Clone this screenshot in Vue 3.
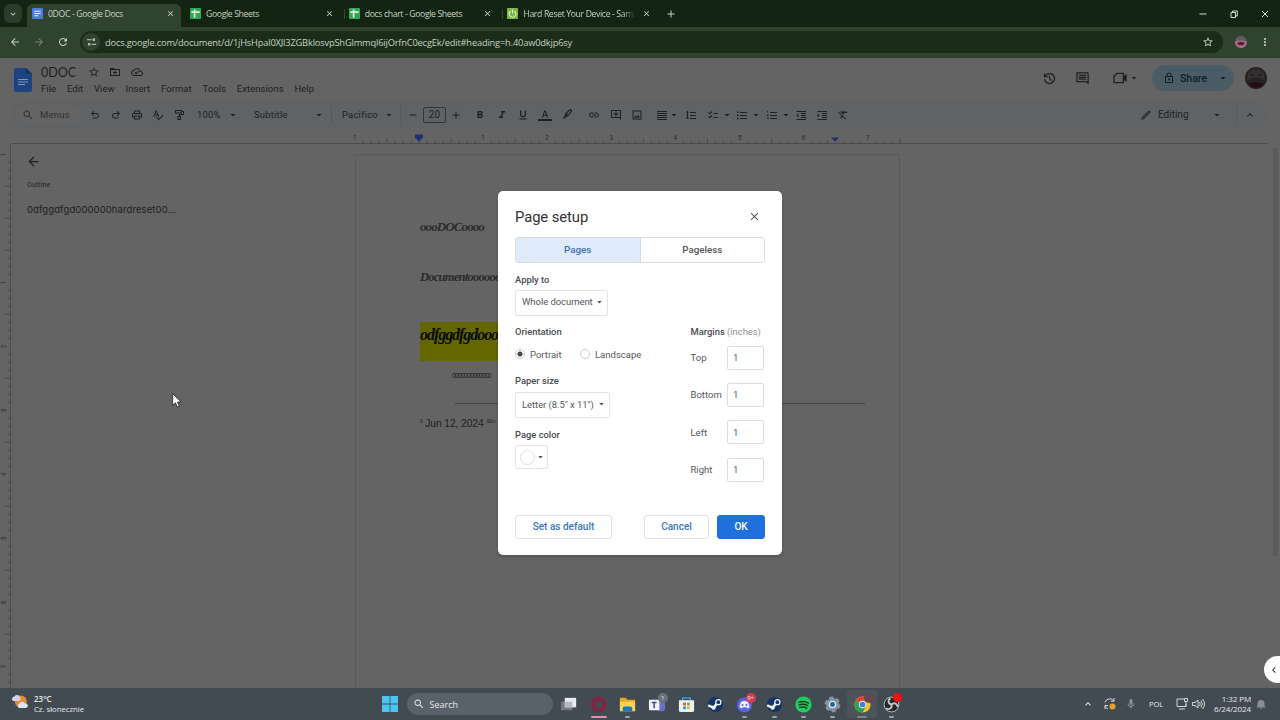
<script setup>
import { h, ref } from "vue";

const paths = {
  back: "M20 11H7.83l5.59-5.59L12 4l-8 8 8 8 1.41-1.41L7.83 13H20v-2z",
  forward: "M4 11h12.17l-5.59-5.59L12 4l8 8-8 8-1.41-1.41L16.17 13H4v-2z",
  reload:
    "M17.65 6.35C16.2 4.9 14.21 4 12 4c-4.42 0-7.99 3.58-7.99 8s3.57 8 7.99 8c3.73 0 6.84-2.55 7.73-6h-2.08c-.82 2.33-3.04 4-5.65 4-3.31 0-6-2.69-6-6s2.69-6 6-6c1.66 0 3.14.69 4.22 1.78L13 11h7V4l-2.35 2.35z",
  tune: "M2 6h10v2H2zM17 4a3 3 0 1 0 0 6 3 3 0 0 0 0-6zm0 2a1 1 0 1 1 0 2 1 1 0 0 1 0-2zM12 16h10v2H12zM7 14a3 3 0 1 0 0 6 3 3 0 0 0 0-6zm0 2a1 1 0 1 1 0 2 1 1 0 0 1 0-2z",
  star: "M22 9.24l-7.19-.62L12 2 9.19 8.63 2 9.24l5.46 4.73L5.82 21 12 17.27 18.18 21l-1.63-7.03L22 9.24zM12 15.4l-3.76 2.27 1-4.28-3.32-2.88 4.38-.38L12 6.1l1.71 4.04 4.38.38-3.32 2.88 1 4.28L12 15.4z",
  more: "M12 8c1.1 0 2-.9 2-2s-.9-2-2-2-2 .9-2 2 .9 2 2 2zm0 2c-1.1 0-2 .9-2 2s.9 2 2 2 2-.9 2-2-.9-2-2-2zm0 6c-1.1 0-2 .9-2 2s.9 2 2 2 2-.9 2-2-.9-2-2-2z",
  close: "M19 6.41L17.59 5 12 10.59 6.41 5 5 6.41 10.59 12 5 17.59 6.41 19 12 13.41 17.59 19 19 17.59 13.41 12z",
  plus: "M19 13h-6v6h-2v-6H5v-2h6V5h2v6h6v2z",
  minus: "M19 13H5v-2h14v2z",
  down: "M7 10l5 5 5-5z",
  chevronDown: "M7.41 8.59L12 13.17l4.59-4.58L18 10l-6 6-6-6 1.41-1.41z",
  chevronUp: "M7.41 15.41L12 10.83l4.59 4.58L18 14l-6-6-6 6z",
  chevronLeft: "M15.41 7.41L14 6l-6 6 6 6 1.41-1.41L10.83 12z",
  move: "M2 4h8l2 2h10v14H2V4zm2 4v10h16V8H4zm7 1h2v3h3v2h-3v3h-2v-3H8v-2h3z",
  cloud:
    "M19.35 10.04A7.49 7.49 0 0 0 12 4C9.11 4 6.6 5.64 5.35 8.04A5.994 5.994 0 0 0 0 14c0 3.31 2.69 6 6 6h13c2.76 0 5-2.24 5-5 0-2.64-2.05-4.78-4.65-4.96zM19 18H6c-2.21 0-4-1.79-4-4s1.79-4 4-4h.71C7.37 7.69 9.48 6 12 6c3.04 0 5.5 2.46 5.5 5.5v.5H19c1.66 0 3 1.34 3 3s-1.34 3-3 3zm-9-3.82l-2.09-2.09L6.5 13.5 10 17l6.01-6.01-1.41-1.41z",
  history:
    "M12 21q-3.45 0-6.012-2.287T3.05 13H5.1q.35 2.6 2.313 4.3T12 19q2.925 0 4.963-2.037T19 12t-2.037-4.962T12 5q-1.725 0-3.225.8T6.25 8H9v2H3V4h2v2.35q1.275-1.6 3.113-2.475T12 3q1.875 0 3.513.713t2.85 1.924 1.925 2.85T21 12t-.712 3.513-1.925 2.85-2.85 1.925T12 21m2.8-4.8L11 12.4V7h2v4.6l3.2 3.2z",
  comment:
    "M21.99 4c0-1.1-.89-2-1.99-2H4c-1.1 0-2 .9-2 2v12c0 1.1.9 2 2 2h14l4 4-.01-18zM20 4v13.17L18.83 16H4V4h16zM6 12h12v2H6zm0-3h12v2H6zm0-3h12v2H6z",
  video: "M7 4h11v5l4-3v12l-4-3v5H2V9zM8 6L4 10v8h12V6z",
  lock: "M18 8h-1V6c0-2.76-2.24-5-5-5S7 3.24 7 6v2H6c-1.1 0-2 .9-2 2v10c0 1.1.9 2 2 2h12c1.1 0 2-.9 2-2V10c0-1.1-.9-2-2-2zM9 6c0-1.66 1.34-3 3-3s3 1.34 3 3v2H9V6zm9 14H6V10h12v10zm-6-3c1.1 0 2-.9 2-2s-.9-2-2-2-2 .9-2 2 .9 2 2 2z",
  search:
    "M15.5 14h-.79l-.28-.27C15.41 12.59 16 11.11 16 9.5 16 5.91 13.09 3 9.5 3S3 5.91 3 9.5 5.91 16 9.5 16c1.61 0 3.09-.59 4.23-1.57l.27.28v.79l5 4.99L20.49 19l-4.99-5zm-6 0C7.01 14 5 11.99 5 9.5S7.01 5 9.5 5 14 7.01 14 9.5 11.99 14 9.5 14z",
  undo: "M7 19v-2h7.1q1.575 0 2.738-1T18 13.5 16.838 11 14.1 10H7.8l2.6 2.6L9 14 4 9l5-5 1.4 1.4L7.8 8h6.3q2.425 0 4.163 1.575T20 13.5t-1.737 3.925T14.1 19z",
  redo: "M17 19v-2H9.9q-1.575 0-2.738-1T6 13.5 7.162 11 9.9 10h6.3l-2.6 2.6L15 14l5-5-5-5-1.4 1.4L16.2 8H9.9Q7.475 8 5.737 9.575T4 13.5t1.737 3.925T9.9 19z",
  print:
    "M19 8h-1V3H6v5H5c-1.66 0-3 1.34-3 3v6h4v4h12v-4h4v-6c0-1.66-1.34-3-3-3zM8 5h8v3H8V5zm8 12v2H8v-4h8v2zm2-2v-2H6v2H4v-4c0-.55.45-1 1-1h14c.55 0 1 .45 1 1v4h-2z",
  spell:
    "M12.45 16h2.09L9.43 3H7.57L2.46 16h2.09l1.12-3h5.64l1.14 3zm-6.02-5L8.5 5.48 10.57 11H6.43zm15.16.59l-8.09 8.09L9.83 16l-1.41 1.41 5.09 5.09L23 13l-1.41-1.41z",
  paint: "M4 2h14v2h4v8h-8v2h2v8H9v-8h3v-4h8V6h-2v3H4zM6 4v3h10V4zM11 16v4h3v-4z",
  bold: "M15.6 10.79c.97-.67 1.65-1.77 1.65-2.79 0-2.26-1.75-4-4-4H7v14h7.04c2.09 0 3.71-1.7 3.71-3.79 0-1.52-.86-2.82-2.15-3.42zM10 6.5h3c.83 0 1.5.67 1.5 1.5s-.67 1.5-1.5 1.5h-3v-3zm3.5 9H10v-3h3.5c.83 0 1.5.67 1.5 1.5s-.67 1.5-1.5 1.5z",
  italic: "M10 4v3h2.21l-3.42 8H6v3h8v-3h-2.21l3.42-8H18V4z",
  underline:
    "M12 17c3.31 0 6-2.69 6-6V3h-2.5v8c0 1.93-1.57 3.5-3.5 3.5S8.5 12.93 8.5 11V3H6v8c0 3.31 2.69 6 6 6zm-7 2v2h14v-2H5z",
  color:
    "M-2 20h28v4H-2v-4zm7.49-3h2.42l1.27-3.58h5.65L16.09 17h2.42L13.25 3h-2.5L5.49 17zm4.42-5.61l2.03-5.79h.12l2.03 5.79H9.91z",
  marker: "M18 0q5 1 4 5l-7 9-5 2-4 4-2-2 3-4 2-6zm0 3l-6 6 2 3 6-8z",
  link: "M3.9 12c0-1.71 1.39-3.1 3.1-3.1h4V7H7c-2.76 0-5 2.24-5 5s2.24 5 5 5h4v-1.9H7c-1.71 0-3.1-1.39-3.1-3.1zM8 13h8v-2H8v2zm9-6h-4v1.9h4c1.71 0 3.1 1.39 3.1 3.1s-1.39 3.1-3.1 3.1h-4V17h4c2.76 0 5-2.24 5-5s-2.24-5-5-5z",
  addComment: "M2 2h20v20l-4-4H2zm2 2v12h15l1 1V4zM11 5h2v4h4v2h-4v4h-2v-4H7V9h4z",
  image:
    "M19 5v14H5V5h14m0-2H5c-1.1 0-2 .9-2 2v14c0 1.1.9 2 2 2h14c1.1 0 2-.9 2-2V5c0-1.1-.9-2-2-2zm-4.86 8.86l-3 3.87L9 13.14 6 17h12l-3.86-5.14z",
  justify: "M2 22h20v-2H2v2zm0-4h20v-2H2v2zm0-4h20v-2H2v2zm0-4h20V8H2v2zm0-6v2h20V4H2z",
  spacing:
    "M6 7h2.5L5 3.5 1.5 7H4v10H1.5L5 20.5 8.5 17H6V7zm4-1v2h12V6H10zm0 14h12v-2H10v2zm0-6h12v-2H10v2z",
  checklist:
    "M22 8h-9v2h9V8zm0 8h-9v2h9v-2zM5.54 11L2 7.46l1.41-1.41 2.12 2.12 4.24-4.24 1.41 1.41L5.54 11zm0 8L2 15.46l1.41-1.41 2.12 2.12 4.24-4.24 1.41 1.41L5.54 19z",
  bullets:
    "M2 5h3v3H2zM2 11.500h3v3H2zM2 18h3v3H2zM8 20h14v-2H8v2zm0-6h14v-2H8v2zm0-8v2h14V6H8z",
  numbers:
    "M2 17h2v.5H3v1h1v.5H2v1h3v-4H2v1zm1-9h1V4H2v1h1v3zm-1 3h1.8L2 13.1v.9h3v-1H3.2L5 10.9V10H2v1zM8 6v2h14V6H8zm0 14h14v-2H8v2zm0-6h14v-2H8v2z",
  outdent: "M12 18h10v-2H12v2zM3 13l4 4V9l-4 4zm0 9h19v-2H3v2zM3 4v2h19V4H3zm9 6h10V8H12v2zm0 4h10v-2H12v2z",
  indent: "M3 22h19v-2H3v2zM3 9v8l4-4-4-4zm9 9h10v-2H12v2zM3 4v2h19V4H3zm9 6h10V8H12v2zm0 4h10v-2H12v2z",
  clear:
    "M3.27 5L2 6.27l6.97 6.97L6.5 19h3l1.57-3.66L16.73 21 18 19.73 3.55 5.27 3.27 5zM6 5v.18L8.82 8h2.4l-.72 1.68 2.1 2.1L14.21 8H20V5H6z",
  edit: "M14.06 9.02l.92.92L5.92 19H5v-.92l9.06-9.06M17.66 3c-.25 0-.51.1-.7.29l-1.83 1.83 3.75 3.75 1.83-1.83c.39-.39.39-1.02 0-1.41l-2.34-2.34c-.2-.2-.45-.29-.71-.29zm-3.6 3.19L3 17.25V21h3.75L17.81 9.94l-3.75-3.75z",
  mic: "M12 14c1.66 0 3-1.34 3-3V5c0-1.66-1.34-3-3-3S9 3.34 9 5v6c0 1.66 1.34 3 3 3zm5-3c0 2.76-2.24 5-5 5s-5-2.24-5-5H5c0 3.53 2.61 6.43 6 6.92V21h2v-3.08c3.39-.49 6-3.39 6-6.92h-2z",
  bell: "M12 22c1.1 0 2-.9 2-2h-4c0 1.1.89 2 2 2zm7-6v-5c0-3.6-2.4-7-7-7s-7 3.4-7 7v5l-2 2v1h18v-1l-2-2z",
};

const Icon = (props) =>
  h("svg", { class: "icon", viewBox: "0 0 24 24" }, [h("path", { d: paths[props.name] })]);
Icon.props = ["name"];

const tabs = [
  { title: "0DOC - Google Docs", kind: "doc" },
  { title: "Google Sheets", kind: "sheet" },
  { title: "docs chart - Google Sheets", kind: "sheet" },
  { title: "Hard Reset Your Device - Sams", kind: "power" },
];
const menus = ["File", "Edit", "View", "Insert", "Format", "Tools", "Extensions", "Help"];
const margins = ref([
  { label: "Top", value: "1" },
  { label: "Bottom", value: "1" },
  { label: "Left", value: "1" },
  { label: "Right", value: "1" },
]);

// one inch on the rulers is 64.1px, with a tick every 1/8
const inch = 64.1;
const hTicks = Array.from({ length: 69 }, (_, i) => i).filter((i) => i % 8 || i === 8);
const vTicks = Array.from({ length: 67 }, (_, i) => i).filter((i) => i % 8 || i === 8);
const inches = [-1, 1, 2, 3, 4, 5, 6, 7];
</script>

<template>
  <div class="screen">
    <header class="tab-strip">
      <button class="tab-search"><Icon name="chevronDown" /></button>
      <div v-for="(tab, i) in tabs" :key="i" class="tab" :class="{ active: i === 0 }">
        <svg class="favicon" viewBox="0 0 12 12">
          <rect width="12" height="12" rx="1" :class="tab.kind" />
          <path v-if="tab.kind === 'doc'" d="M2.5 3.5h7M2.5 6h7M2.5 8.5h4.5" />
          <path v-else-if="tab.kind === 'sheet'" d="M1.5 4.5h9M5 1.5v9" class="thick" />
          <path v-else d="M4 3.2a3.7 3.7 0 1 0 4 0M6 1.5v4.5" />
        </svg>
        <span class="tab-title">{{ tab.title }}</span>
        <Icon name="close" />
      </div>
      <button class="new-tab"><Icon name="plus" /></button>
      <div class="win-buttons">
        <svg viewBox="0 0 10 10"><path d="M1.5 5h7" /></svg>
        <svg viewBox="0 0 10 10"><path d="M2 3.5h4.5v5H2zM3.5 3.5v-1.5h4.8v5H6.5" /></svg>
        <svg viewBox="0 0 10 10"><path d="M2 2l6 6M8 2l-6 6" /></svg>
      </div>
    </header>

    <nav class="address-bar">
      <Icon name="back" />
      <Icon name="forward" class="dim" />
      <Icon name="reload" />
      <div class="omnibox">
        <span class="site-info"><Icon name="tune" /></span>
        <span class="url">docs.google.com/document/d/1jHsHpal0XJl3ZGBklosvpShGlmmql6ijOrfnC0ecgEk/edit#heading=h.40aw0dkjp6sy</span>
        <Icon name="star" />
      </div>
      <svg class="avatar-small" viewBox="0 0 12 12">
        <circle cx="6" cy="6" r="6" fill="#665b61" />
        <path d="M0 6c3-2 8-2 12 0a6 6 0 0 1-12 0" fill="#9a7886" />
        <ellipse cx="6" cy="7.5" rx="3.6" ry="1.8" fill="#6d1235" />
      </svg>
      <Icon name="more" />
    </nav>

    <main class="docs">
      <div class="docs-header">
        <svg class="docs-logo" viewBox="0 0 18 24">
          <path d="M2 0h10l6 6v16a2 2 0 0 1-2 2H2a2 2 0 0 1-2-2V2a2 2 0 0 1 2-2z" fill="#1d4380" />
          <path d="M12 0l6 6h-6z" fill="#143363" />
          <path d="M4 11.5h10M4 14h10M4 16.5h7" stroke="#8295b2" stroke-width="1.2" />
        </svg>
        <div class="title-block">
          <div class="title-row">
            <span class="doc-title">0DOC</span>
            <Icon name="star" />
            <Icon name="move" />
            <Icon name="cloud" />
          </div>
          <div class="menu-row">
            <span v-for="menu in menus" :key="menu">{{ menu }}</span>
          </div>
        </div>
        <div class="header-actions">
          <Icon name="history" />
          <Icon name="comment" />
          <span class="meet"><Icon name="video" /><Icon name="down" class="caret" /></span>
          <button class="share">
            <Icon name="lock" /><span>Share</span><Icon name="down" class="caret" />
          </button>
          <svg class="avatar" viewBox="0 0 22 22">
            <circle cx="11" cy="11" r="11" fill="#262022" />
            <path d="M3 6c4-5 12-5 16 0l1 7c-6-3-12-3-18 0z" fill="#333032" />
            <ellipse cx="7.5" cy="8" rx="2" ry="1" fill="#252022" />
            <ellipse cx="14.5" cy="8" rx="2" ry="1" fill="#252022" />
            <path d="M4 17c4-2.500 10-2.500 14 0-4 4.500-10 4.500-14 0" fill="#2a0812" />
          </svg>
        </div>
      </div>

      <div class="toolbar">
        <div class="menus-pill"><Icon name="search" /><span>Menus</span></div>
        <div class="cells first">
          <Icon v-for="n in ['undo', 'redo', 'print', 'spell', 'paint']" :key="n" :name="n" />
        </div>
        <div class="drop zoom"><span>100%</span><Icon name="down" class="caret" /></div>
        <div class="drop style"><span>Subtitle</span><Icon name="down" class="caret" /></div>
        <div class="drop font"><span>Pacifico</span><Icon name="down" class="caret" /></div>
        <div class="size">
          <Icon name="minus" /><span class="size-box">20</span><Icon name="plus" />
        </div>
        <div class="cells format">
          <Icon v-for="n in ['bold', 'italic', 'underline', 'color', 'marker']" :key="n" :name="n" :class="n" />
        </div>
        <div class="cells insert">
          <Icon v-for="n in ['link', 'addComment', 'image']" :key="n" :name="n" />
        </div>
        <div class="lists">
          <Icon name="justify" /><Icon name="down" />
          <Icon name="spacing" />
          <Icon name="checklist" /><Icon name="down" />
          <Icon name="bullets" /><Icon name="down" />
          <Icon name="numbers" /><Icon name="down" />
          <Icon name="outdent" /><Icon name="indent" /><Icon name="clear" />
        </div>
        <div class="mode">
          <Icon name="edit" /><span>Editing</span><Icon name="down" class="caret" />
        </div>
        <div class="collapse"><Icon name="chevronUp" /></div>
      </div>

      <svg class="ruler-h" viewBox="0 0 1280 16">
        <path d="M11 15.5H1268" />
        <path v-for="i in hTicks" :key="i" :d="`M${354.9 + (i * inch) / 8} ${i % 4 ? 12.5 : 10}V15.5`" />
        <text v-for="n in inches" :key="n" :x="419 + n * inch" y="12">{{ Math.abs(n) }}</text>
        <path class="handle" d="M415 6.5h8v3l-4 4-4-4z" />
        <path class="handle" d="M831 9.5h8l-4 4z" />
      </svg>

      <div class="workspace">
        <svg class="ruler-v" viewBox="0 0 12 544">
          <path d="M10.5 0V544" />
          <path v-for="i in vTicks" :key="i" :d="`M${i % 4 ? 8 : 4.5} ${10.4 + (i * 64) / 8}H10.5`" />
          <text v-for="n in inches" :key="n" :transform="`translate(6 ${74.4 + n * 64}) rotate(-90)`">{{ Math.abs(n) }}</text>
        </svg>
        <aside class="outline">
          <Icon name="back" />
          <h2>Outline</h2>
          <p>0dfggdfgd000000hardreset00...</p>
        </aside>
        <article class="page">
          <p class="script line-a">oooDOCoooo</p>
          <p class="script line-b">Documentoooooo</p>
          <p class="script line-c">odfggdfgdooo</p>
          <p class="line-d">0000000000000</p>
          <hr />
          <p class="line-e"><sup>0</sup> <b>Jun 12, 2024</b> <sup>00m</sup></p>
        </article>
        <div class="scrollbar"></div>
      </div>
    </main>

    <footer class="taskbar">
      <div class="weather">
        <svg viewBox="0 0 16 16">
          <circle cx="8.8" cy="7.5" r="6" fill="#e58a35" />
          <path d="M1 7a2.500 2.500 0 0 1 1.500-4.500A3 3 0 0 1 8 3.500 2 2 0 0 1 7 7z" fill="#cbd6f3" />
          <path d="M7 14a2.500 2.500 0 0 1 .5-4.500 3 3 0 0 1 5.500 0 2.200 2.200 0 0 1 1 4.500z" fill="#dfe4fb" />
        </svg>
        <div><b>23°C</b><span>Cz. słonecznie</span></div>
      </div>

      <div class="apps">
        <svg class="start" viewBox="0 0 16 16">
          <path d="M0 0h7.600v7.600H0zM8.400 0H16v7.600H8.400zM0 8.400h7.600V16H0zM8.400 8.400H16V16H8.400z" fill="#4cc4f2" />
        </svg>
        <div class="search-box"><Icon name="search" /><span>Search</span></div>
        <div class="app">
          <svg viewBox="0 0 20 20">
            <rect x="1" y="7" width="12" height="9" fill="#737a80" />
            <rect x="5" y="3" width="12" height="10" fill="#e9ecee" />
            <rect x="5" y="7" width="8" height="6" fill="#b4b9bd" />
          </svg>
        </div>
        <div class="app opera">
          <svg viewBox="0 0 20 20">
            <ellipse cx="10" cy="10" rx="6" ry="6.500" fill="none" stroke="#852440" stroke-width="4" />
          </svg>
        </div>
        <div class="app running">
          <svg viewBox="0 0 20 20">
            <path d="M2 3h6l2 2h8v12H2z" fill="#e5a91f" />
            <path d="M2 7h16v10H2z" fill="#fbd258" />
            <path d="M5 17v-3q0-2 2-2h6q2 0 2 2v3z" fill="#187cba" />
          </svg>
        </div>
        <div class="app">
          <svg viewBox="0 0 20 20">
            <rect x="9" y="6" width="9" height="11" rx="3" fill="#6b70c8" />
            <rect x="1" y="5" width="11" height="11" rx="1" fill="#eef0fb" />
            <path d="M4 8h5M6.500 8v6" stroke="#444b92" stroke-width="1.600" />
          </svg>
          <i class="badge gray">1</i>
        </div>
        <div class="app">
          <svg viewBox="0 0 20 20">
            <path d="M6 6V3h8v3" fill="none" stroke="#33a5df" stroke-width="1.500" />
            <path d="M2 5.500h16V16q0 2-2 2H4q-2 0-2-2z" fill="#eef1f4" />
            <path d="M6.500 8h3v3h-3z" fill="#e2572c" />
            <path d="M10.500 8h3v3h-3z" fill="#76b52b" />
            <path d="M6.500 12h3v3h-3z" fill="#249bd8" />
            <path d="M10.500 12h3v3h-3z" fill="#edb522" />
          </svg>
        </div>
        <div class="app">
          <svg viewBox="0 0 20 20">
            <circle cx="10" cy="10" r="8" fill="#123665" />
            <path d="M2.300 11l6 2.500 3.500-5" stroke="#eef3f8" stroke-width="2.600" fill="none" />
            <circle cx="13" cy="7.500" r="2.700" fill="#123665" stroke="#eef3f8" stroke-width="1.300" />
            <circle cx="8" cy="13.300" r="2.200" fill="#eef3f8" />
          </svg>
        </div>
        <div class="app running">
          <svg viewBox="0 0 20 20">
            <circle cx="10" cy="10.500" r="8" fill="#5865e8" />
            <path d="M6.500 7q3.500-1.300 7 0 1.800 3 1.700 6.200l-2.300 1.100-.9-1.300H8l-.9 1.300-2.300-1.100Q4.700 10 6.500 7z" fill="#f2f3ff" />
            <circle cx="8" cy="10.500" r="1.100" fill="#5865e8" />
            <circle cx="12" cy="10.500" r="1.100" fill="#5865e8" />
          </svg>
          <i class="badge red">9+</i>
        </div>
        <div class="app running">
          <svg viewBox="0 0 20 20">
            <circle cx="10" cy="10" r="8" fill="#123665" />
            <path d="M2.300 11l6 2.500 3.500-5" stroke="#eef3f8" stroke-width="2.600" fill="none" />
            <circle cx="13" cy="7.500" r="2.700" fill="#123665" stroke="#eef3f8" stroke-width="1.300" />
            <circle cx="8" cy="13.300" r="2.200" fill="#eef3f8" />
          </svg>
        </div>
        <div class="app running">
          <svg viewBox="0 0 20 20">
            <circle cx="10" cy="10" r="8.500" fill="#1ed05e" />
            <path d="M5 7.500q5.500-1.600 10.300 1M5.500 10.300q4.700-1.300 8.900 1M6 13q4-1 7.300.9" fill="none" stroke="#123420" stroke-width="1.500" stroke-linecap="round" />
          </svg>
        </div>
        <div class="app running">
          <svg viewBox="0 0 20 20">
            <circle cx="10" cy="10" r="6.800" fill="#88939c" />
            <circle cx="10" cy="10" r="7" fill="none" stroke="#88939c" stroke-width="2.600" stroke-dasharray="4.400 2.930" />
            <circle cx="10" cy="10" r="3.300" fill="#1d62a7" stroke="#d4e5f3" stroke-width="1.400" />
          </svg>
        </div>
        <div class="app running selected">
          <svg viewBox="0 0 20 20">
            <circle cx="10" cy="10" r="8.500" fill="#efc52f" />
            <path d="M10 10L2.640 5.750A8.500 8.500 0 0 1 17.360 5.750z" fill="#dd4436" />
            <path d="M10 10L2.640 5.750A8.500 8.500 0 0 0 10 18.500l3.500-6z" fill="#2da14f" />
            <circle cx="10" cy="10" r="3.900" fill="#f2f4f6" />
            <circle cx="10" cy="10" r="3" fill="#3d7ee0" />
          </svg>
          <i class="badge face"></i>
        </div>
        <div class="app running">
          <svg viewBox="0 0 20 20">
            <circle cx="10" cy="10" r="7.800" fill="#24262a" stroke="#c2c5c8" stroke-width="1" />
            <path d="M10 10C6 9 6 5 9 3.500M10 10c3-2.800 6.500-.5 6.300 2.700M10 10c1 4-2.800 6-5.600 4" fill="none" stroke="#c2c5c8" stroke-width="2" />
          </svg>
          <i class="badge alert"></i>
        </div>
      </div>

      <div class="tray">
        <Icon name="chevronUp" />
        <svg class="sync" viewBox="0 0 14 14">
          <path d="M2 5.500A5 5 0 0 1 11 4M11 1v3.200H7.800M5 12A5 5 0 0 1 2 8.500M2 12V8.500h3" />
          <circle cx="9.500" cy="9.500" r="3" />
        </svg>
        <Icon name="mic" class="dim" />
        <span class="lang">POL</span>
        <svg class="net" viewBox="0 0 14 14">
          <path d="M9 2H2v7.500h9V7M4 12h6M9.500 1.500h3v3h-3zM11 4.500v5" />
        </svg>
        <svg class="net" viewBox="0 0 14 14">
          <path d="M1.500 5.500H4L7 3v8L4 8.500H1.500zM8.500 5q1.500 2 0 4M10 3.500q2.700 3.500 0 7M11.500 2q4 5 0 10" />
        </svg>
        <div class="clock"><span>1:32 PM</span><span>6/24/2024</span></div>
        <Icon name="bell" class="dim" />
      </div>
    </footer>

    <section class="dialog">
      <div class="dialog-head"><h1>Page setup</h1><Icon name="close" /></div>
      <div class="segmented"><button class="on">Pages</button><button>Pageless</button></div>
      <div class="dialog-body">
        <div class="options">
          <h3>Apply to</h3>
          <button class="select">Whole document<Icon name="down" /></button>
          <h3 class="h-orient">Orientation</h3>
          <div class="radios">
            <label><i class="radio checked"></i>Portrait</label>
            <label><i class="radio"></i>Landscape</label>
          </div>
          <h3 class="h-paper">Paper size</h3>
          <button class="select paper">Letter (8.5" x 11")<Icon name="down" /></button>
          <h3 class="h-color">Page color</h3>
          <button class="swatch"><i></i><Icon name="down" /></button>
        </div>
        <div class="margins">
          <h3>Margins <span>(inches)</span></h3>
          <label v-for="m in margins" :key="m.label">
            {{ m.label }}<input v-model="m.value" type="text" />
          </label>
        </div>
      </div>
      <div class="dialog-actions">
        <button class="default">Set as default</button>
        <button class="cancel">Cancel</button>
        <button class="ok">OK</button>
      </div>
    </section>

    <button class="side-handle"><Icon name="chevronLeft" /></button>
    <svg class="cursor" viewBox="0 0 10 15">
      <path d="M.7.7v11.600l2.700-2.500 1.900 4.200 2-.9-1.900-4.100h3.700z" fill="#fff" stroke="#222" stroke-width=".8" />
    </svg>
  </div>
</template>

<style>
body {
  overflow: hidden;
  background: #646464;
}
</style>

<style scoped>
* {
  box-sizing: border-box;
}

.screen {
  position: relative;
  width: 1280px;
  height: 720px;
  display: flex;
  flex-direction: column;
  overflow: hidden;
  font-family: Roboto, "Liberation Sans", sans-serif;
  font-size: 9.5px;
  color: #1f2022;
}

button {
  font: inherit;
  color: inherit;
  border: none;
  background: transparent;
  padding: 0;
}

h1,
h2,
h3,
p {
  margin: 0;
  font-weight: 400;
}

.icon {
  width: 12px;
  height: 12px;
  flex: none;
  fill: currentColor;
}

.dim {
  opacity: 0.45;
}

/* browser chrome */
.tab-strip {
  height: 27px;
  display: flex;
  align-items: center;
  background: #142412;
  color: #c6d2c3;
  font-family: "Open Sans", sans-serif;
  font-size: 8.7px;
  letter-spacing: -0.37px;
}

.tab-search {
  width: 18px;
  height: 19px;
  margin: 0 5px 0 4px;
  border-radius: 6px;
  background: #2b3c2a;
  display: flex;
  align-items: center;
  justify-content: center;
}

.tab-search .icon {
  width: 10px;
}

.tab {
  width: 158.7px;
  height: 23px;
  margin-top: 4px;
  padding: 0 10px 4px 5px;
  display: flex;
  align-items: center;
  gap: 5px;
}

.tab.active {
  width: 154px;
  margin-right: 4px;
  padding-right: 6px;
  border-radius: 6px 6px 0 0;
  background: #30432f;
}

.tab + .tab + .tab {
  background: linear-gradient(#35472f, #35472f) 0 5px / 1px 10px no-repeat;
}

.favicon {
  width: 11px;
  height: 11px;
  flex: none;
  fill: none;
  stroke: #e2efdc;
  stroke-width: 1.2;
}

.favicon rect {
  stroke: none;
}

.favicon .thick {
  stroke-width: 1.8;
}

.doc {
  fill: #4a7fd0;
}

.sheet {
  fill: #2fa855;
}

.power {
  fill: #7bb83b;
}

.tab-title {
  flex: 1;
  white-space: nowrap;
}

.tab:nth-last-of-type(2) .tab-title {
  mask-image: linear-gradient(to right, #000 100px, transparent 112px);
}

.tab .icon {
  width: 9px;
  height: 9px;
}

.new-tab {
  display: flex;
  margin-left: 4px;
}

.win-buttons {
  margin-left: auto;
  display: flex;
  gap: 21px;
  padding-right: 10px;
}

.win-buttons svg {
  width: 10px;
  height: 10px;
  fill: none;
  stroke: #d2dccf;
}

.address-bar {
  height: 31px;
  display: flex;
  align-items: center;
  padding: 0 9px 1px;
  background: #30432f;
  color: #c6d2c3;
}

.address-bar > .icon:nth-child(2),
.address-bar > .icon:nth-child(3) {
  margin-left: 12px;
}

.omnibox {
  width: 1143px;
  height: 22px;
  margin: 0 12px 0 11px;
  border-radius: 11px;
  background: #1b2d19;
  display: flex;
  align-items: center;
  padding: 0 9px 0 2px;
}

.site-info {
  width: 18px;
  height: 18px;
  border-radius: 50%;
  background: #30432f;
  display: flex;
  align-items: center;
  justify-content: center;
  margin-right: 5px;
}

.site-info .icon {
  width: 11px;
}

.url {
  flex: 1;
  white-space: nowrap;
  font-family: "Open Sans", sans-serif;
  font-size: 9.3px;
  letter-spacing: -0.18px;
}

.avatar-small {
  width: 12px;
  height: 12px;
}

.address-bar > .icon:last-child {
  margin-left: 12px;
}

/* docs editor, dimmed by the dialog scrim */
.docs {
  flex: 1;
  min-height: 0;
  display: flex;
  flex-direction: column;
  background: #646464;
}

.docs-header {
  height: 44px;
  display: flex;
  padding: 0 13px 0 14px;
}

.docs-logo {
  width: 18px;
  height: 24px;
  margin: 10px 9px 0 0;
}

.title-block {
  flex: 1;
}

.title-row {
  height: 16px;
  margin-top: 6px;
  display: flex;
  align-items: center;
  gap: 9.5px;
}

.doc-title {
  width: 37px;
  font-family: Lato, sans-serif;
  font-size: 12.500px;
}

.menu-row {
  display: flex;
  gap: 10.8px;
  height: 16px;
  align-items: center;
  letter-spacing: 0.05px;
}

.header-actions {
  display: flex;
  align-items: center;
  height: 40px;
}

.header-actions > .icon {
  width: 15px;
  height: 15px;
  margin-right: 18px;
}

.meet {
  display: flex;
  align-items: center;
  margin: 0 12px 0 4px;
}

.meet .icon:first-child {
  width: 16px;
  height: 16px;
}

.share {
  width: 82px;
  height: 26px;
  border-radius: 13px;
  background: #4c5c66;
  color: #101e28;
  display: flex;
  align-items: center;
  padding-left: 11px;
  font-size: 10.5px;
  font-weight: 500;
}

.share span {
  margin: 0 10px 0 5px;
}

.avatar {
  width: 22px;
  height: 22px;
  margin-left: 11px;
}

.toolbar {
  height: 26px;
  margin: 0 13px 0 11px;
  border-radius: 13px;
  background: #5f6365;
  display: flex;
  align-items: center;
}

.toolbar > div {
  display: flex;
  align-items: center;
}

.menus-pill {
  width: 66px;
  height: 20px;
  margin-left: 5px;
  padding-left: 6px;
  border-radius: 10px;
  background: #646464;
  color: #303133;
}

.menus-pill span {
  margin-left: 6px;
  letter-spacing: 0.25px;
}

.toolbar span {
  position: relative;
  top: -0.5px;
}

.cells .icon {
  margin: 0 4.6px;
}

.first {
  margin-left: 2px;
}

.drop {
  justify-content: space-between;
  letter-spacing: 0.2px;
}

.zoom {
  width: 42px;
  margin-left: 7px;
}

.style {
  width: 71px;
  margin-left: 15px;
}

.toolbar .font {
  width: 64px;
  height: 20px;
  margin-left: 6px;
  padding-left: 10px;
  border-left: 1px solid #56595a;
}

.toolbar .size {
  height: 20px;
  margin-left: 5px;
  padding-left: 6px;
  border-left: 1px solid #595c5d;
}

.size-box {
  width: 23px;
  height: 16px;
  margin: 0 4px;
  border: 1px solid #333638;
  border-radius: 2px;
  text-align: center;
  line-height: 14px;
  font-size: 10px;
}

.format {
  margin-left: 7px;
}

.toolbar .format .icon {
  margin: 0 4.9px;
  overflow: visible;
}

.insert {
  margin-left: 6px;
}

.toolbar .lists {
  display: grid;
  grid-template-columns: 12px 17px 22px 14px 15px 14px 16px 14px 15px 21px 21px 12px;
  margin-left: 9px;
}

.toolbar .mode {
  margin-left: auto;
  width: 97px;
  height: 22px;
  border-right: 1px solid #57595b;
}

.mode span {
  width: 53px;
  margin-left: 6px;
  font-size: 10px;
}

.collapse {
  width: 30px;
  padding-left: 7px;
}

.ruler-h {
  width: 1280px;
  height: 16px;
  flex: none;
}

.ruler-h path,
.ruler-v path {
  stroke: #444;
  stroke-width: 0.7;
  fill: none;
}

.ruler-h .handle {
  fill: #1c3273;
  stroke: none;
}

.ruler-h text,
.ruler-v text {
  font-size: 6.5px;
  fill: #2d2d2d;
  text-anchor: middle;
}

.workspace {
  flex: 1;
  min-height: 0;
  display: flex;
}

.ruler-v {
  width: 12px;
  height: 544px;
}

.outline {
  width: 343px;
  padding: 10px 0 0 15px;
}

.outline .icon {
  display: block;
  width: 15px;
  height: 15px;
  margin-left: -1px;
}

.outline h2 {
  margin-top: 11px;
  font-size: 7px;
  line-height: 10px;
  letter-spacing: 0.2px;
}

.outline p {
  margin-top: 14px;
  font-family: Inter, sans-serif;
  font-size: 9.5px;
  line-height: 12px;
  letter-spacing: 0.1px;
}

.page {
  width: 545px;
  height: 540px;
  margin-top: 10px;
  padding: 0 34px 0 64px;
  border: 1px solid #595959;
  border-bottom: none;
}

.script {
  font-family: "Liberation Serif", serif;
  font-style: italic;
  font-weight: 700;
  white-space: nowrap;
}

.line-a {
  margin-top: 62px;
  font-size: 13px;
  line-height: 20px;
  letter-spacing: -0.9px;
  color: #2b2b2b;
}

.line-b {
  margin-top: 30px;
  font-size: 12.500px;
  line-height: 20px;
  letter-spacing: -0.75px;
  color: #2b2b2b;
}

.line-c {
  width: 110px;
  height: 39px;
  margin-top: 35px;
  background: #646600;
  color: #090a00;
  font-size: 16px;
  line-height: 25px;
  letter-spacing: -1.05px;
}

.line-d {
  margin: 9px 0 0 32px;
  font-size: 7px;
  line-height: 12px;
  letter-spacing: -0.95px;
}

.page hr {
  height: 1px;
  margin: 21px 0 0 35px;
  border: none;
  background: #454545;
}

.line-e {
  margin-top: 7px;
  font-family: "Liberation Sans", sans-serif;
  font-size: 10.300px;
  line-height: 20px;
  white-space: nowrap;
  letter-spacing: -0.1px;
}

.line-e b {
  font-weight: 400;
}

.line-e sup {
  font-size: 5px;
  letter-spacing: -0.3px;
}

.scrollbar {
  width: 5px;
  height: 408px;
  margin: 4px 2px 0 auto;
  border-radius: 3px;
  background: #5a5a5a;
}

/* windows taskbar */
.taskbar {
  height: 32px;
  display: flex;
  align-items: center;
  background: #424b52;
  color: #e4e8eb;
  font-family: "Open Sans", sans-serif;
  font-size: 8px;
}

.weather {
  width: 381.500px;
  padding-left: 12px;
  display: flex;
  gap: 6px;
}

.weather svg {
  width: 16px;
  height: 16px;
}

.weather div,
.clock {
  display: flex;
  flex-direction: column;
  line-height: 10.500px;
}

.weather b {
  font-weight: 600;
}

.weather span {
  font-size: 7.700px;
}

.apps {
  display: flex;
  align-items: center;
}

.start {
  width: 16px;
  height: 16px;
  margin-right: 9px;
}

.search-box {
  width: 146px;
  height: 22px;
  margin-right: 2px;
  border-radius: 11px;
  background: #59626a;
  display: flex;
  align-items: center;
  padding-left: 6px;
  gap: 5px;
  font-size: 9px;
}

.app {
  position: relative;
  width: 29.300px;
  height: 28px;
  display: flex;
  align-items: center;
  justify-content: center;
}

.app svg {
  width: 19px;
  height: 19px;
}

.app.running::after,
.app.opera::after {
  content: "";
  position: absolute;
  left: 12px;
  bottom: 0;
  width: 5px;
  height: 2px;
  border-radius: 1px;
  background: #9ba2a7;
}

.app.opera::after {
  left: 7px;
  width: 16px;
  background: #e590a9;
}

.app.selected {
  background: #4c545a;
  border-radius: 3px;
}

.app.selected::after {
  left: 10px;
  width: 10px;
  background: #7e868b;
}

.badge {
  position: absolute;
  right: 0;
  top: 3px;
  width: 10px;
  height: 10px;
  border-radius: 50%;
  font-style: normal;
  font-size: 6px;
  line-height: 10px;
  text-align: center;
}

.gray {
  right: 4px;
  background: #69727a;
}

.red {
  right: 4px;
  background: #d83b4f;
}

.face {
  right: 3px;
  background: #65484d;
}

.alert {
  right: 4px;
  width: 9px;
  height: 9px;
  background: #f10f12;
}

.tray {
  margin-left: auto;
  padding-right: 13px;
  display: flex;
  align-items: center;
}

.sync,
.net {
  width: 14px;
  height: 14px;
  fill: none;
  stroke: #d2d7da;
}

.sync {
  margin: 0 8px 0 9px;
}

.sync circle {
  fill: #e8a02c;
  stroke: none;
}

.lang {
  width: 15px;
  margin: 0 11px 0 12px;
  font-size: 7.500px;
}

.net + .net {
  margin-left: 2px;
}

.clock {
  width: 46px;
  align-items: flex-end;
  margin-right: 4px;
  letter-spacing: -0.1px;
}

.side-handle {
  position: absolute;
  left: 1263.500px;
  top: 656px;
  width: 30px;
  height: 27px;
  border-radius: 14px;
  background: #fff;
  color: #333;
  padding-left: 4px;
  display: flex;
  align-items: center;
}

.cursor {
  position: absolute;
  left: 172px;
  top: 393px;
  width: 10px;
  height: 15px;
}

/* page setup dialog */
.dialog {
  position: absolute;
  left: 498px;
  top: 191px;
  width: 284px;
  height: 364px;
  padding: 0 17px;
  border-radius: 5px;
  background: #fff;
  color: #54575b;
  box-shadow: 0 1px 3px rgba(0, 0, 0, 0.25);
}

.dialog-head {
  height: 46px;
  padding-top: 5px;
  display: flex;
  align-items: center;
  justify-content: space-between;
}

.dialog-head h1 {
  font-size: 14.800px;
  letter-spacing: -0.08px;
  color: #303236;
}

.dialog-head .icon {
  width: 13px;
  height: 13px;
  margin-right: 4px;
}

.segmented {
  height: 26px;
  display: flex;
  border: 1px solid #dadce0;
  border-radius: 3px;
  font-size: 9.800px;
  font-weight: 500;
  letter-spacing: 0.2px;
}

.segmented button {
  flex: 1;
  padding-bottom: 2px;
}

.segmented .on {
  background: #dfeafa;
  color: #3f70b8;
  border-right: 1px solid #cbdcf2;
}

.dialog-body {
  display: flex;
  height: 251.500px;
}

.options {
  width: 175.500px;
}

.dialog h3 {
  font-size: 9.400px;
  font-weight: 500;
  line-height: 12px;
  color: #484b4f;
}

.options h3:first-child {
  margin-top: 10.500px;
}

.select {
  width: 93px;
  height: 26px;
  margin-top: 4px;
  padding: 0 2px 2px 6px;
  border: 1px solid #e1e3e6;
  border-radius: 2px;
  display: flex;
  align-items: center;
  justify-content: space-between;
  white-space: nowrap;
  letter-spacing: -0.06px;
}

.select .icon,
.swatch .icon {
  width: 11px;
}

.paper {
  width: 95px;
  margin-top: 5px;
}

.dialog .h-orient {
  margin-top: 10.500px;
}

.radios {
  display: flex;
  height: 12px;
  margin-top: 10px;
}

.radios label {
  width: 65px;
  display: flex;
  align-items: center;
}

.radio {
  width: 10px;
  height: 10px;
  flex: none;
  margin-right: 5px;
  border: 1px solid #c9ccc3;
  border-radius: 50%;
}

.radio.checked {
  background: radial-gradient(circle, #4b4d50 2.300px, transparent 2.900px);
}

.dialog .h-paper {
  margin-top: 15px;
}

.dialog .h-color {
  margin-top: 10.500px;
}

.swatch {
  width: 33px;
  height: 24px;
  margin-top: 4.500px;
  border: 1px solid #e3e5e7;
  border-radius: 2px;
  display: flex;
  align-items: center;
  padding-left: 4px;
}

.swatch i {
  width: 15px;
  height: 15px;
  border: 1px solid #dddfe1;
  border-radius: 50%;
}

.margins {
  padding-top: 63px;
}

.margins h3 {
  margin-bottom: 7.500px;
}

.margins h3 span {
  font-weight: 400;
  color: #909397;
}

.margins label {
  display: flex;
  align-items: center;
  justify-content: space-between;
  width: 73.500px;
  height: 24px;
  margin-bottom: 13.400px;
}

.margins input {
  width: 37px;
  height: 24px;
  padding: 0 5px;
  border: 1px solid #dadce0;
  border-radius: 2px;
  outline: none;
  font: inherit;
  color: inherit;
}

.dialog-actions {
  display: flex;
  font-size: 10px;
  font-weight: 500;
  letter-spacing: 0.2px;
}

.dialog-actions button {
  height: 24px;
  padding-bottom: 1px;
  border: 1px solid #dfe1e4;
  border-radius: 3px;
  color: #3a76bd;
}

.dialog-actions .default {
  width: 97px;
  margin-right: auto;
}

.dialog-actions .cancel {
  width: 65px;
  margin-right: 8px;
}

.dialog-actions .ok {
  width: 48px;
  background: #1f6fdc;
  border-color: #1f6fdc;
  color: #fff;
}
</style>
